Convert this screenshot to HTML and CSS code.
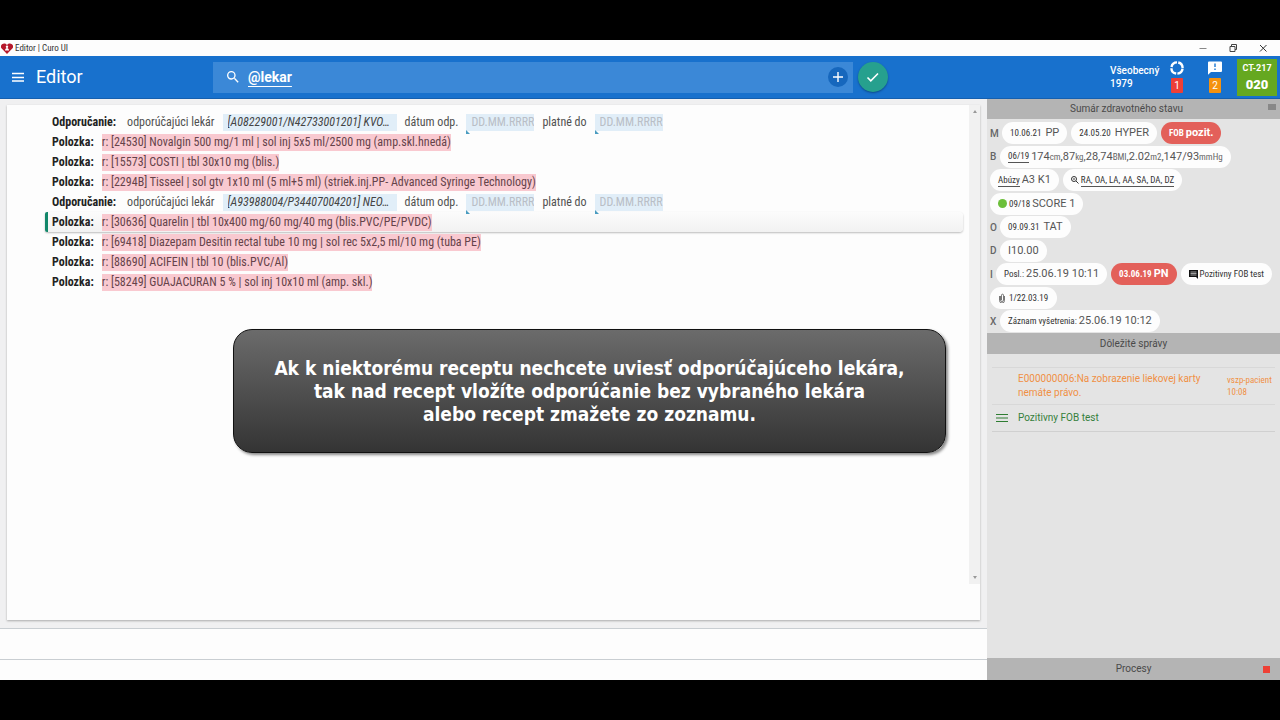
FILE: index.html
```html
<!DOCTYPE html>
<html lang="sk">
<head>
<meta charset="utf-8">
<title>Editor | Curo UI</title>
<link rel="stylesheet" href="styles.css">
</head>
<body>
<div class="window">
  <div class="titlebar">
    <svg class="logo" viewBox="0 0 12 11"><path d="M6 11 1.200 6A3.200 3.200 0 0 1 1 1.300C2.500 0 5 0 6 2 7 0 9.500 0 11 1.300A3.200 3.200 0 0 1 10.800 6z" fill="#b5182b"/><circle cx="6" cy="3.700" r="1.200" fill="#fff"/><path d="M4 7.500c0-3.500 4-3.500 4 0z" fill="#fff"/></svg>
    <span class="titletext">Editor | Curo UI</span>
    <button class="winbtn" aria-label="Minimalizovať"><svg viewBox="0 0 10 10"><path d="M1.500 5.500h7" stroke="#888"/></svg></button>
    <button class="winbtn" aria-label="Obnoviť"><svg viewBox="0 0 10 10"><path d="M2 3.500h5v5H2zM3.500 3.500v-2h5v5H7" fill="none" stroke="#444"/></svg></button>
    <button class="winbtn" aria-label="Zavrieť"><svg viewBox="0 0 10 10"><path d="m2 2 6.500 6.500M8.500 2 2 8.500" stroke="#333"/></svg></button>
  </div>
  <header class="appbar">
    <button class="menu" aria-label="Menu"><svg viewBox="0 0 12 10"><path d="M0 1.500h12M0 5.500h12M0 9h12" stroke="#fff" stroke-width="1.300"/></svg></button>
    <h1 class="apptitle">Editor</h1>
    <div class="search">
      <svg class="searchicon" viewBox="3 3 18 18"><path fill="#fff" d="M15.500 14h-.79l-.28-.27A6.470 6.470 0 0 0 16 9.500 6.500 6.500 0 1 0 9.500 16c1.610 0 3.090-.59 4.230-1.570l.27.28v.79l5 4.990L20.490 19zm-6 0A4.500 4.500 0 1 1 9.500 5a4.500 4.500 0 0 1 0 9z"/></svg>
      <input class="searchinput" aria-label="Hľadať" value="@lekar">
      <button class="add" aria-label="Pridať"><svg viewBox="0 0 10 10"><path d="M5 0v10M0 5h10" stroke="#fff" stroke-width="1.400"/></svg></button>
    </div>
    <button class="confirm" aria-label="Potvrdiť"><svg viewBox="0 0 14 12"><path d="m1.500 6.500 3.300 3.300L12 2.500" fill="none" stroke="#fff" stroke-width="1.600"/></svg></button>
    <div class="patient">Všeobecný<br>1979</div>
    <div class="status"><svg viewBox="0 0 14 14"><circle cx="7" cy="7" r="5.600" fill="none" stroke="#fff" stroke-width="2.400" stroke-dasharray="7.500 1.290" stroke-dashoffset="-.65"/></svg><span class="count red">1</span></div>
    <div class="status"><svg viewBox="0 0 14 14"><path d="M1 .5h12a1 1 0 0 1 1 1V10a1 1 0 0 1-1 1H3L0 13.800V1.500a1 1 0 0 1 1-1z" fill="#fff"/><path d="M7 2.500v3.500M7 7.500v1.500" stroke="#1976d2" stroke-width="1.400"/></svg><span class="count orange">2</span></div>
    <div class="room"><span>CT-217</span><strong>020</strong></div>
  </header>
  <div class="body">
    <main class="main">
      <section class="sheet">
        <ul class="lines">
          <li class="line"><b>Odporučanie:</b><label class="f1" for="d1">odporúčajúci lekár</label><input class="doctor" id="d1" value="[A08229001/N42733001201] KVO…"><label for="o1">dátum odp.</label><span class="date"><input id="o1" placeholder="DD.MM.RRRR"></span><label for="p1">platné do</label><span class="date"><input id="p1" placeholder="DD.MM.RRRR"></span></li>
          <li class="line"><b>Polozka:</b><mark>r: [24530] Novalgin 500 mg/1 ml | sol inj 5x5 ml/2500 mg (amp.skl.hnedá)</mark></li>
          <li class="line"><b>Polozka:</b><mark>r: [15573] COSTI | tbl 30x10 mg (blis.)</mark></li>
          <li class="line"><b>Polozka:</b><mark>r: [2294B] Tisseel | sol gtv 1x10 ml (5 ml+5 ml) (striek.inj.PP- Advanced Syringe Technology)</mark></li>
          <li class="line"><b>Odporučanie:</b><label class="f1" for="d2">odporúčajúci lekár</label><input class="doctor" id="d2" value="[A93988004/P34407004201] NEO…"><label for="o2">dátum odp.</label><span class="date"><input id="o2" placeholder="DD.MM.RRRR"></span><label for="p2">platné do</label><span class="date"><input id="p2" placeholder="DD.MM.RRRR"></span></li>
          <li class="line active"><b>Polozka:</b><mark>r: [30636] Quarelin | tbl 10x400 mg/60 mg/40 mg (blis.PVC/PE/PVDC)</mark></li>
          <li class="line"><b>Polozka:</b><mark>r: [69418] Diazepam Desitin rectal tube 10 mg | sol rec 5x2,5 ml/10 mg (tuba PE)</mark></li>
          <li class="line"><b>Polozka:</b><mark>r: [88690] ACIFEIN | tbl 10 (blis.PVC/Al)</mark></li>
          <li class="line"><b>Polozka:</b><mark>r: [58249] GUAJACURAN 5 % | sol inj 10x10 ml (amp. skl.)</mark></li>
        </ul>
        <div class="scroll"><i class="up"></i><i class="down"></i></div>
      </section>
      <div class="strip"></div>
      <div class="strip last"></div>
      <div class="tip">Ak k niektorému receptu nechcete uviesť odporúčajúceho lekára,<br>tak nad recept vložíte odporúčanie bez vybraného lekára<br>alebo recept zmažete zo zoznamu.</div>
    </main>
    <aside class="side">
      <h2 class="sidehead first">Sumár zdravotného stavu<span class="lines3"></span></h2>
      <div class="summary">
        <div class="row"><b class="m">M</b><span class="chip wide"><small>10.06.21</small>PP</span><span class="chip wide"><small>24.05.20</small>HYPER</span><span class="chip alert"><small>FOB</small><strong>pozit.</strong></span></div>
        <div class="row"><b>B</b><span class="chip"><a href="#"><small>06/19</small></a><span class="vals">174<small>cm</small>,87<small>kg</small>,28,74<small>BMI</small>,2.02<small>m2</small>,147/93<small>mmHg</small></span></span></div>
        <div class="row"><span class="chip"><a href="#"><small>Abúzy</small></a>A3 K1</span><span class="chip"><svg class="zoomout" viewBox="0 0 8 8"><circle cx="3" cy="3" r="2.500" fill="none" stroke="#333"/><path d="M2 3h2M5 5l2.500 2.500" stroke="#333"/></svg><a href="#"><small>RA, OA, LA, AA, SA, DA, DZ</small></a></span></div>
        <div class="row"><span class="chip"><i class="dot"></i><small>09/18</small>SCORE 1</span></div>
        <div class="row"><b>O</b><span class="chip wide"><small>09.09.31</small>TAT</span></div>
        <div class="row"><b>D</b><span class="chip">I10.00</span></div>
        <div class="row"><b class="i">I</b><span class="chip"><small>Posl.:</small>25.06.19 10:11</span><span class="chip alert"><small>03.06.19</small><strong>PN</strong></span><span class="chip"><svg class="note" viewBox="0 0 9 9"><path d="M0 0h9v9L7 7H0z" fill="#111"/><path d="M1.500 2h6M1.500 3.500h6M1.500 5h6" stroke="#ddd" stroke-width=".7"/></svg><small>Pozitivny FOB test</small></span></div>
        <div class="row"><span class="chip attach"><svg class="clip" viewBox="0 0 6 10"><path d="M1.500 3v4a1.500 1.500 0 0 0 3 0V2.200a1 1 0 0 0-2 0V7M.5 3v4.500a2.500 2.500 0 0 0 5 0V3" fill="none" stroke="#555" stroke-width=".8"/></svg><small>1/22.03.19</small></span></div>
        <div class="row"><b>X</b><span class="chip"><small>Záznam vyšetrenia:</small>25.06.19 10:12</span></div>
      </div>
      <h2 class="sidehead tall">Dôležité správy</h2>
      <ul class="news">
        <li class="warn"><span class="text">E000000006:Na zobrazenie liekovej karty nemáte právo.</span><span class="meta">vszp-pacient<br>10:08</span></li>
        <li class="ok"><svg viewBox="0 0 12 9"><path d="M0 .5h12M0 4h12M0 7.500h12" stroke="#2e7d32"/></svg><span class="text">Pozitivny FOB test</span></li>
      </ul>
      <h2 class="sidehead foot">Procesy<span class="stop"></span></h2>
    </aside>
  </div>
</div>
</body>
</html>
```
FILE: styles.css
```css
* { box-sizing: border-box; }
body { margin: 0; min-height: 100vh; padding: 40px 0; background: #000; display: flex; flex-direction: column; font-family: Roboto, sans-serif; color: #333; }
button { border: 0; padding: 0; background: none; display: flex; align-items: center; justify-content: center; }
input { border: 0; padding: 0; font: inherit; background: none; min-width: 0; }
h1, h2, ul { margin: 0; padding: 0; font-weight: 400; list-style: none; }
svg { display: block; flex: none; }
.window { flex: 1; display: flex; flex-direction: column; background: #f0f0f1; }

.titlebar { height: 16px; background: #fdfdfd; display: flex; align-items: center; padding: 0 11px 0 1px; }
.logo { width: 12px; height: 11px; }
.titletext { flex: 1; margin-left: 2px; font: 9px/14px "Roboto Condensed", Roboto, sans-serif; color: #333; }
.winbtn { width: 12px; height: 14px; margin-left: 18px; }
.winbtn svg { width: 10px; height: 10px; }

.appbar { height: 43px; background: #1871cd; border-bottom: 1px solid #155fae; display: flex; align-items: center; color: #fff; padding-right: 3px; }
.menu { width: 36px; height: 42px; }
.menu svg { width: 12px; height: 10px; }
.apptitle { width: 177px; font-size: 18px; line-height: 20px; }
.search { flex: 0 1 640px; height: 31px; background: #3b88d7; display: flex; align-items: center; padding: 0 5px 0 14px; }
.searchicon { width: 12px; height: 12px; margin-right: 9px; }
.searchinput { flex: 1; font-size: 14px; font-weight: 700; line-height: 20px; color: #fff; text-decoration: underline; text-underline-offset: 4px; }
.add { width: 20px; height: 20px; border-radius: 50%; background: #1667bd; }
.add svg { width: 10px; height: 10px; }
.confirm { width: 30px; height: 30px; margin-left: 5px; border-radius: 50%; background: #26a08e; box-shadow: 0 1px 2px #0d4a8a; }
.confirm svg { width: 14px; height: 12px; }
.patient { flex: none; margin-left: auto; width: 48px; font-size: 10px; font-weight: 500; line-height: 13px; }
.status { flex: none; width: 38px; display: flex; flex-direction: column; align-items: center; gap: 3px; }
.status svg { width: 14px; height: 14px; }
.count { width: 12px; height: 15px; border-radius: 1px; font-size: 10px; line-height: 15px; text-align: center; }
.red { background: #ee3f36; }
.orange { background: #f5920f; }
.room { flex: none; width: 40px; height: 37px; margin-left: 3px; background: #65a820; display: flex; flex-direction: column; align-items: center; justify-content: center; font-size: 9px; line-height: 16px; font-weight: 700; }
.room strong { font-size: 13px; line-height: 18px; font-weight: 900; }

.body { flex: 1; display: flex; }
.main { flex: 1; min-width: 0; position: relative; display: flex; flex-direction: column; }
.sheet { flex: 1; margin: 6px 7px 8px; background: #fdfdfd; box-shadow: 0 1px 2px #aaa; display: flex; }
.lines { flex: 1; padding: 7px 6px 0 38px; font-family: "Roboto Condensed", "Liberation Sans Narrow", Roboto, sans-serif; font-size: 12px; }
.line { height: 20px; padding-left: 7px; display: flex; align-items: center; line-height: 16px; white-space: nowrap; color: #505050; }
.line b { color: #222; }
.line mark { margin-left: 8px; line-height: 17px; background: #f9c9d0; color: #65434a; }
.active { border-left: 3px solid #12876a; padding-left: 4px; border-radius: 2px 4px 4px 2px; background: linear-gradient(#fcfcfc, #f2f2f2); box-shadow: 0 1px 2px #bbb; }
.f1 { margin-left: 11px; }
.doctor { width: 174px; height: 17px; margin: 0 8px; padding-left: 5px; background: #e1eef8; font-style: italic; color: #444; }
.date { position: relative; width: 68px; height: 17px; margin: 0 8px; background: #e1eef8; }
.date input { width: 100%; height: 17px; padding-left: 5px; }
.date input::placeholder { color: #b9bec6; opacity: 1; }
.date::after { content: ""; position: absolute; left: 0; bottom: -3px; border: 2px solid transparent; border-left-color: #4a9cc0; border-bottom-color: #4a9cc0; }
.scroll { width: 11px; margin-bottom: 36px; background: #f1f1f1; display: flex; flex-direction: column; justify-content: space-between; align-items: center; padding: 5px 0; }
.up, .down { border: 2px solid transparent; }
.up { border-top: 0; border-bottom: 3px solid #999; }
.down { border-bottom: 0; border-top: 3px solid #999; }
.strip { height: 31px; background: #fdfdfd; border-top: 1px solid #c9ced2; }
.last { height: 21px; }
.tip { position: absolute; left: 233px; right: 41px; top: 230px; padding: 27px 10px 26px; border: 1px solid #111; border-radius: 19px; background: linear-gradient(#6b6b6b, #343434); box-shadow: 2px 2px 3px #888; color: #fff; text-align: center; font: 700 19px/23px "DejaVu Sans Condensed", "DejaVu Sans", sans-serif; }

.side { width: 293px; flex: none; background: #e4e4e4; display: flex; flex-direction: column; }
.sidehead { position: relative; height: 20px; background: #b4b4b4; color: #4a4a4a; font-size: 10px; line-height: 20px; text-align: center; }
.first { padding-right: 14px; }
.tall { height: 21px; line-height: 21px; }
.foot { margin-top: auto; height: 22px; line-height: 22px; }
.lines3 { position: absolute; right: 4px; top: 5px; width: 8px; height: 6px; background: #888; }
.stop { position: absolute; right: 10px; top: 8px; width: 7px; height: 7px; background: #ee4035; }
.summary { min-height: 214px; padding: 3px 3px 1px; display: flex; flex-direction: column; justify-content: space-between; }
.row { display: flex; align-items: center; gap: 4px; }
.row > b { width: 6px; font-size: 10px; font-weight: 500; color: #666; }
.row > .m { width: 8px; }
.row > .i { width: 2px; }
.chip { height: 22px; padding: 0 8px; border-radius: 11px; background: #fdfdfd; display: flex; align-items: center; gap: 2px; font-size: 11px; line-height: 22px; color: #555; white-space: nowrap; }
.wide { gap: 4px; }
.chip small { font-family: "Roboto Condensed", Roboto, sans-serif; font-size: 9px; color: #333; }
.chip a { color: #333; line-height: 11px; border-bottom: 1px solid #555; text-decoration: none; }
.chip .vals small { color: #666; }
.chip.alert { background: #e3605a; color: #fff; }
.chip.alert small { color: #fff; font-weight: 700; }
.dot { width: 9px; height: 9px; border-radius: 50%; background: #6cbf3a; }
.zoomout { width: 8px; height: 8px; }
.note { width: 9px; height: 9px; }
.attach { padding: 0 9px; gap: 4px; }
.clip { width: 6px; height: 10px; }
.news { padding: 13px 5px 0; font-size: 10px; line-height: 14px; }
.news li { display: flex; border-top: 1px solid #d8d8d8; }
.warn { height: 37px; padding-top: 4px; color: #f09045; }
.warn .text { width: 200px; margin-left: 26px; }
.warn .meta { margin-left: 9px; font: 9px/12px "Roboto Condensed", Roboto, sans-serif; padding-top: 2px; }
.news .ok { height: 28px; padding-left: 4px; align-items: center; gap: 10px; color: #36803c; border-bottom: 1px solid #d0d0d0; }
.ok svg { width: 12px; height: 9px; }
```
